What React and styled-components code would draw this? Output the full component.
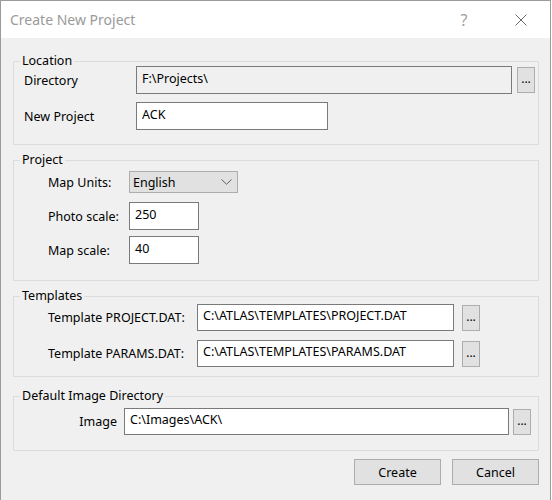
import React from 'react';
import styled, { createGlobalStyle } from 'styled-components';

const GlobalStyle = createGlobalStyle`
  html, body {
    margin: 0;
    padding: 0;
    background: #ffffff;
  }
  body {
    font-family: 'Noto Sans', 'Open Sans', sans-serif;
    font-size: 12.5px;
    color: #000;
  }
  * {
    box-sizing: border-box;
  }
`;

const Window = styled.div`
  width: 551px;
  height: 500px;
  border: 1px solid #9b9b9b;
  border-bottom: none;
  background: #f0f0f0;
  display: flex;
  flex-direction: column;
  overflow: hidden;
`;

const TitleBar = styled.div`
  height: 37px;
  flex: 0 0 37px;
  background: #fff;
  display: flex;
  align-items: center;
  padding-left: 9px;
  padding-right: 6px;
`;

const Title = styled.div`
  flex: 1;
  font-size: 14px;
  color: #9a9a9a;
`;

const TitleButton = styled.div`
  width: 46px;
  height: 37px;
  display: flex;
  align-items: center;
  justify-content: center;
  color: #a0a0a0;
  font-size: 16px;
  margin-left: ${p => p.$ml || 0}px;
`;

const Body = styled.div`
  flex: 1;
  padding: 18px 11px 0 12px;
`;

const Group = styled.fieldset`
  margin: ${p => p.$mt || 0}px 0 0;
  padding: 0 0 0 6px;
  border: 1px solid #dcdcdc;
  min-width: 0;
`;

const Legend = styled.legend`
  padding: 0 2px;
  line-height: 10px;
  font-size: 12.5px;
`;

const Rows = styled.div`
  display: flex;
  flex-direction: column;
  gap: ${p => p.$gap}px;
  padding-top: ${p => p.$pt}px;
  padding-bottom: ${p => p.$pb}px;
  padding-right: ${p => p.$pr || 0}px;
`;

const Row = styled.div`
  display: flex;
  align-items: center;
  margin-top: ${p => p.$mt || 0}px;
`;

const Label = styled.div`
  flex: 0 0 ${p => p.$w}px;
  padding-left: ${p => p.$indent || 0}px;
  padding-right: ${p => p.$pad || 0}px;
  text-align: ${p => p.$align || 'left'};
  white-space: nowrap;
`;

const Field = styled.input`
  height: ${p => p.$h || 28}px;
  width: ${p => (p.$w ? `${p.$w}px` : 'auto')};
  flex: ${p => (p.$w ? `0 0 ${p.$w}px` : '1')};
  min-width: 0;
  border: 1px solid #7a7a7a;
  background: ${p => (p.disabled ? '#f0f0f0' : '#fff')};
  color: #000;
  font-family: inherit;
  font-size: 12.5px;
  padding: 0 5px 4px;
  margin: 0;
  outline: none;
`;

const Browse = styled.button`
  flex: 0 0 18px;
  width: 18px;
  height: 26px;
  margin-left: ${p => p.$gap}px;
  border: 1px solid #adadad;
  background: #e1e1e1;
  padding: 0;
  font-family: inherit;
  font-size: 12px;
  color: #000;
  line-height: 1;
  display: flex;
  align-items: flex-end;
  justify-content: center;
  padding-bottom: 7px;
`;

const Combo = styled.div`
  width: 109px;
  height: 22px;
  border: 1px solid #adadad;
  background: #e1e1e1;
  display: flex;
  align-items: center;
  justify-content: space-between;
  padding: 0 5px 0 3px;
`;

const Footer = styled.div`
  display: flex;
  justify-content: flex-end;
  gap: 11px;
  margin-top: 8px;
`;

const PushButton = styled.button`
  width: 87px;
  height: 26px;
  border: 1px solid #adadad;
  background: #e1e1e1;
  font-family: inherit;
  font-size: 12.5px;
  color: #000;
  padding: 0;
`;

const Chevron = () => (
  <svg width="11" height="6" viewBox="0 0 11 6">
    <path d="M0.5 0.5 L5.5 5.2 L10.5 0.5" fill="none" stroke="#606060" strokeWidth="1" />
  </svg>
);

const CloseIcon = () => (
  <svg width="12" height="12" viewBox="0 0 12 12">
    <path d="M0.5 0.5 L11.5 11.5 M11.5 0.5 L0.5 11.5" stroke="#6a6a6a" strokeWidth="1" />
  </svg>
);

export default function App() {
  return (
    <>
      <GlobalStyle />
      <Window>
        <TitleBar>
          <Title>Create New Project</Title>
          <TitleButton>?</TitleButton>
          <TitleButton $ml={11}>
            <CloseIcon />
          </TitleButton>
        </TitleBar>
        <Body>
          <Group>
            <Legend>Location</Legend>
            <Rows $gap={8} $pt={0} $pb={14} $pr={3}>
              <Row>
                <Label $w={116} $indent={4}>Directory</Label>
                <Field disabled value="F:\Projects\" readOnly />
                <Browse $gap={5}>...</Browse>
              </Row>
              <Row>
                <Label $w={116} $indent={4}>New Project</Label>
                <Field $w={192} value="ACK" readOnly />
              </Row>
            </Rows>
          </Group>

          <Group $mt={10}>
            <Legend>Project</Legend>
            <Rows $gap={0} $pt={6} $pb={16}>
              <Row>
                <Label $w={109} $indent={28}>Map Units:</Label>
                <Combo>
                  <span>English</span>
                  <Chevron />
                </Combo>
              </Row>
              <Row $mt={9}>
                <Label $w={109} $indent={28}>Photo scale:</Label>
                <Field $w={70} value="250" readOnly />
              </Row>
              <Row $mt={6}>
                <Label $w={109} $indent={28}>Map scale:</Label>
                <Field $w={70} value="40" readOnly />
              </Row>
            </Rows>
          </Group>

          <Group $mt={10}>
            <Legend>Templates</Legend>
            <Rows $gap={9} $pt={3} $pb={9}>
              <Row>
                <Label $w={177} $indent={28}>Template PROJECT.DAT:</Label>
                <Field $w={257} $h={27} value="C:\ATLAS\TEMPLATES\PROJECT.DAT" readOnly />
                <Browse $gap={8}>...</Browse>
              </Row>
              <Row>
                <Label $w={177} $indent={28}>Template PARAMS.DAT:</Label>
                <Field $w={257} $h={27} value="C:\ATLAS\TEMPLATES\PARAMS.DAT" readOnly />
                <Browse $gap={8}>...</Browse>
              </Row>
            </Rows>
          </Group>

          <Group $mt={14}>
            <Legend>Default Image Directory</Legend>
            <Rows $gap={0} $pt={7} $pb={15} $pr={7}>
              <Row>
                <Label $w={104} $pad={7} $align="right">Image</Label>
                <Field $h={27} value="C:\Images\ACK\" readOnly />
                <Browse $gap={4}>...</Browse>
              </Row>
            </Rows>
          </Group>

          <Footer>
            <PushButton>Create</PushButton>
            <PushButton>Cancel</PushButton>
          </Footer>
        </Body>
      </Window>
    </>
  );
}
